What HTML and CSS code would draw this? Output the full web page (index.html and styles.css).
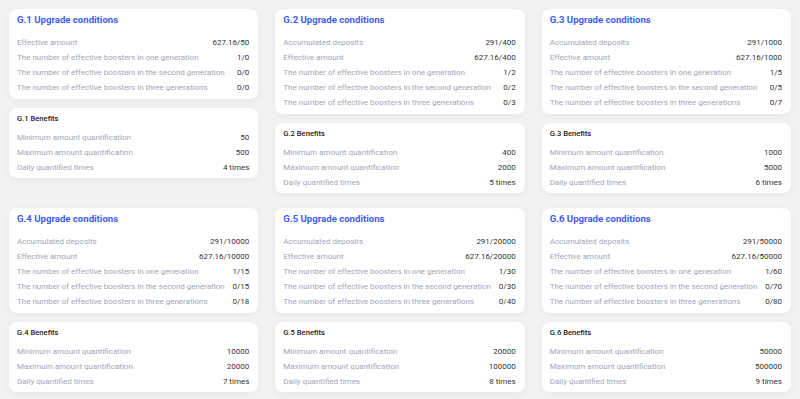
FILE: index.html
```html
<!DOCTYPE html>
<html>
<head>
<meta charset="utf-8">
<link rel="stylesheet" href="styles.css">
</head>
<body>
<div class="grid">
  <div class="col">
    <div class="card cond">
      <div class="title">G.1 Upgrade conditions</div>
      <div class="row"><span class="k">Effective amount</span><span class="v">627.16/50</span></div>
      <div class="row"><span class="k">The number of effective boosters in one generation</span><span class="v">1/0</span></div>
      <div class="row"><span class="k">The number of effective boosters in the second generation</span><span class="v">0/0</span></div>
      <div class="row"><span class="k">The number of effective boosters in three generations</span><span class="v">0/0</span></div>
    </div>
    <div class="card bene">
      <div class="sub">G.1 Benefits</div>
      <div class="row"><span class="k">Minimum amount quantification</span><span class="v">50</span></div>
      <div class="row"><span class="k">Maximum amount quantification</span><span class="v">500</span></div>
      <div class="row"><span class="k">Daily quantified times</span><span class="v">4 times</span></div>
    </div>
  </div>
  <div class="col">
    <div class="card cond">
      <div class="title">G.2 Upgrade conditions</div>
      <div class="row"><span class="k">Accumulated deposits</span><span class="v">291/400</span></div>
      <div class="row"><span class="k">Effective amount</span><span class="v">627.16/400</span></div>
      <div class="row"><span class="k">The number of effective boosters in one generation</span><span class="v">1/2</span></div>
      <div class="row"><span class="k">The number of effective boosters in the second generation</span><span class="v">0/2</span></div>
      <div class="row"><span class="k">The number of effective boosters in three generations</span><span class="v">0/3</span></div>
    </div>
    <div class="card bene">
      <div class="sub">G.2 Benefits</div>
      <div class="row"><span class="k">Minimum amount quantification</span><span class="v">400</span></div>
      <div class="row"><span class="k">Maximum amount quantification</span><span class="v">2000</span></div>
      <div class="row"><span class="k">Daily quantified times</span><span class="v">5 times</span></div>
    </div>
  </div>
  <div class="col">
    <div class="card cond">
      <div class="title">G.3 Upgrade conditions</div>
      <div class="row"><span class="k">Accumulated deposits</span><span class="v">291/1000</span></div>
      <div class="row"><span class="k">Effective amount</span><span class="v">627.16/1000</span></div>
      <div class="row"><span class="k">The number of effective boosters in one generation</span><span class="v">1/5</span></div>
      <div class="row"><span class="k">The number of effective boosters in the second generation</span><span class="v">0/5</span></div>
      <div class="row"><span class="k">The number of effective boosters in three generations</span><span class="v">0/7</span></div>
    </div>
    <div class="card bene">
      <div class="sub">G.3 Benefits</div>
      <div class="row"><span class="k">Minimum amount quantification</span><span class="v">1000</span></div>
      <div class="row"><span class="k">Maximum amount quantification</span><span class="v">5000</span></div>
      <div class="row"><span class="k">Daily quantified times</span><span class="v">6 times</span></div>
    </div>
  </div>
  <div class="col">
    <div class="card cond">
      <div class="title">G.4 Upgrade conditions</div>
      <div class="row"><span class="k">Accumulated deposits</span><span class="v">291/10000</span></div>
      <div class="row"><span class="k">Effective amount</span><span class="v">627.16/10000</span></div>
      <div class="row"><span class="k">The number of effective boosters in one generation</span><span class="v">1/15</span></div>
      <div class="row"><span class="k">The number of effective boosters in the second generation</span><span class="v">0/15</span></div>
      <div class="row"><span class="k">The number of effective boosters in three generations</span><span class="v">0/18</span></div>
    </div>
    <div class="card bene">
      <div class="sub">G.4 Benefits</div>
      <div class="row"><span class="k">Minimum amount quantification</span><span class="v">10000</span></div>
      <div class="row"><span class="k">Maximum amount quantification</span><span class="v">20000</span></div>
      <div class="row"><span class="k">Daily quantified times</span><span class="v">7 times</span></div>
    </div>
  </div>
  <div class="col">
    <div class="card cond">
      <div class="title">G.5 Upgrade conditions</div>
      <div class="row"><span class="k">Accumulated deposits</span><span class="v">291/20000</span></div>
      <div class="row"><span class="k">Effective amount</span><span class="v">627.16/20000</span></div>
      <div class="row"><span class="k">The number of effective boosters in one generation</span><span class="v">1/30</span></div>
      <div class="row"><span class="k">The number of effective boosters in the second generation</span><span class="v">0/30</span></div>
      <div class="row"><span class="k">The number of effective boosters in three generations</span><span class="v">0/40</span></div>
    </div>
    <div class="card bene">
      <div class="sub">G.5 Benefits</div>
      <div class="row"><span class="k">Minimum amount quantification</span><span class="v">20000</span></div>
      <div class="row"><span class="k">Maximum amount quantification</span><span class="v">100000</span></div>
      <div class="row"><span class="k">Daily quantified times</span><span class="v">8 times</span></div>
    </div>
  </div>
  <div class="col">
    <div class="card cond">
      <div class="title">G.6 Upgrade conditions</div>
      <div class="row"><span class="k">Accumulated deposits</span><span class="v">291/50000</span></div>
      <div class="row"><span class="k">Effective amount</span><span class="v">627.16/50000</span></div>
      <div class="row"><span class="k">The number of effective boosters in one generation</span><span class="v">1/60</span></div>
      <div class="row"><span class="k">The number of effective boosters in the second generation</span><span class="v">0/70</span></div>
      <div class="row"><span class="k">The number of effective boosters in three generations</span><span class="v">0/80</span></div>
    </div>
    <div class="card bene">
      <div class="sub">G.6 Benefits</div>
      <div class="row"><span class="k">Minimum amount quantification</span><span class="v">50000</span></div>
      <div class="row"><span class="k">Maximum amount quantification</span><span class="v">500000</span></div>
      <div class="row"><span class="k">Daily quantified times</span><span class="v">9 times</span></div>
    </div>
  </div>
</div>
</body>
</html>
```
FILE: styles.css
```css
html, body {
  margin: 0;
  padding: 0;
  background: #f2f2f3;
  font-family: Roboto, "Noto Sans", sans-serif;
  width: 800px;
  height: 399px;
  overflow: hidden;
}
.grid {
  display: grid;
  grid-template-columns: repeat(3, 1fr);
  column-gap: 17px;
  row-gap: 15px;
  padding: 9px 9px 0 9px;
  align-items: start;
}
.col {
  display: flex;
  flex-direction: column;
  gap: 9px;
}
.card {
  background: #fff;
  border-radius: 8px;
  box-shadow: 0 2px 8px rgba(0, 0, 0, 0.05);
}
.cond {
  padding: 4px 9px 4.5px 8px;
}
.bene {
  padding: 5px 9px 3.5px 8px;
}
.title {
  color: #3f5cf5;
  font-weight: 700;
  font-size: 9.6px;
  line-height: 14px;
  margin-bottom: 7.5px;
}
.sub {
  color: #222;
  font-size: 7.6px;
  font-weight: 500;
  line-height: 12px;
  margin-bottom: 4.5px;
}
.row {
  display: flex;
  justify-content: space-between;
  align-items: center;
  height: 15px;
  font-size: 8px;
  white-space: nowrap;
}
.k {
  color: #a2a6b5;
}
.v {
  color: #333;
}
```
